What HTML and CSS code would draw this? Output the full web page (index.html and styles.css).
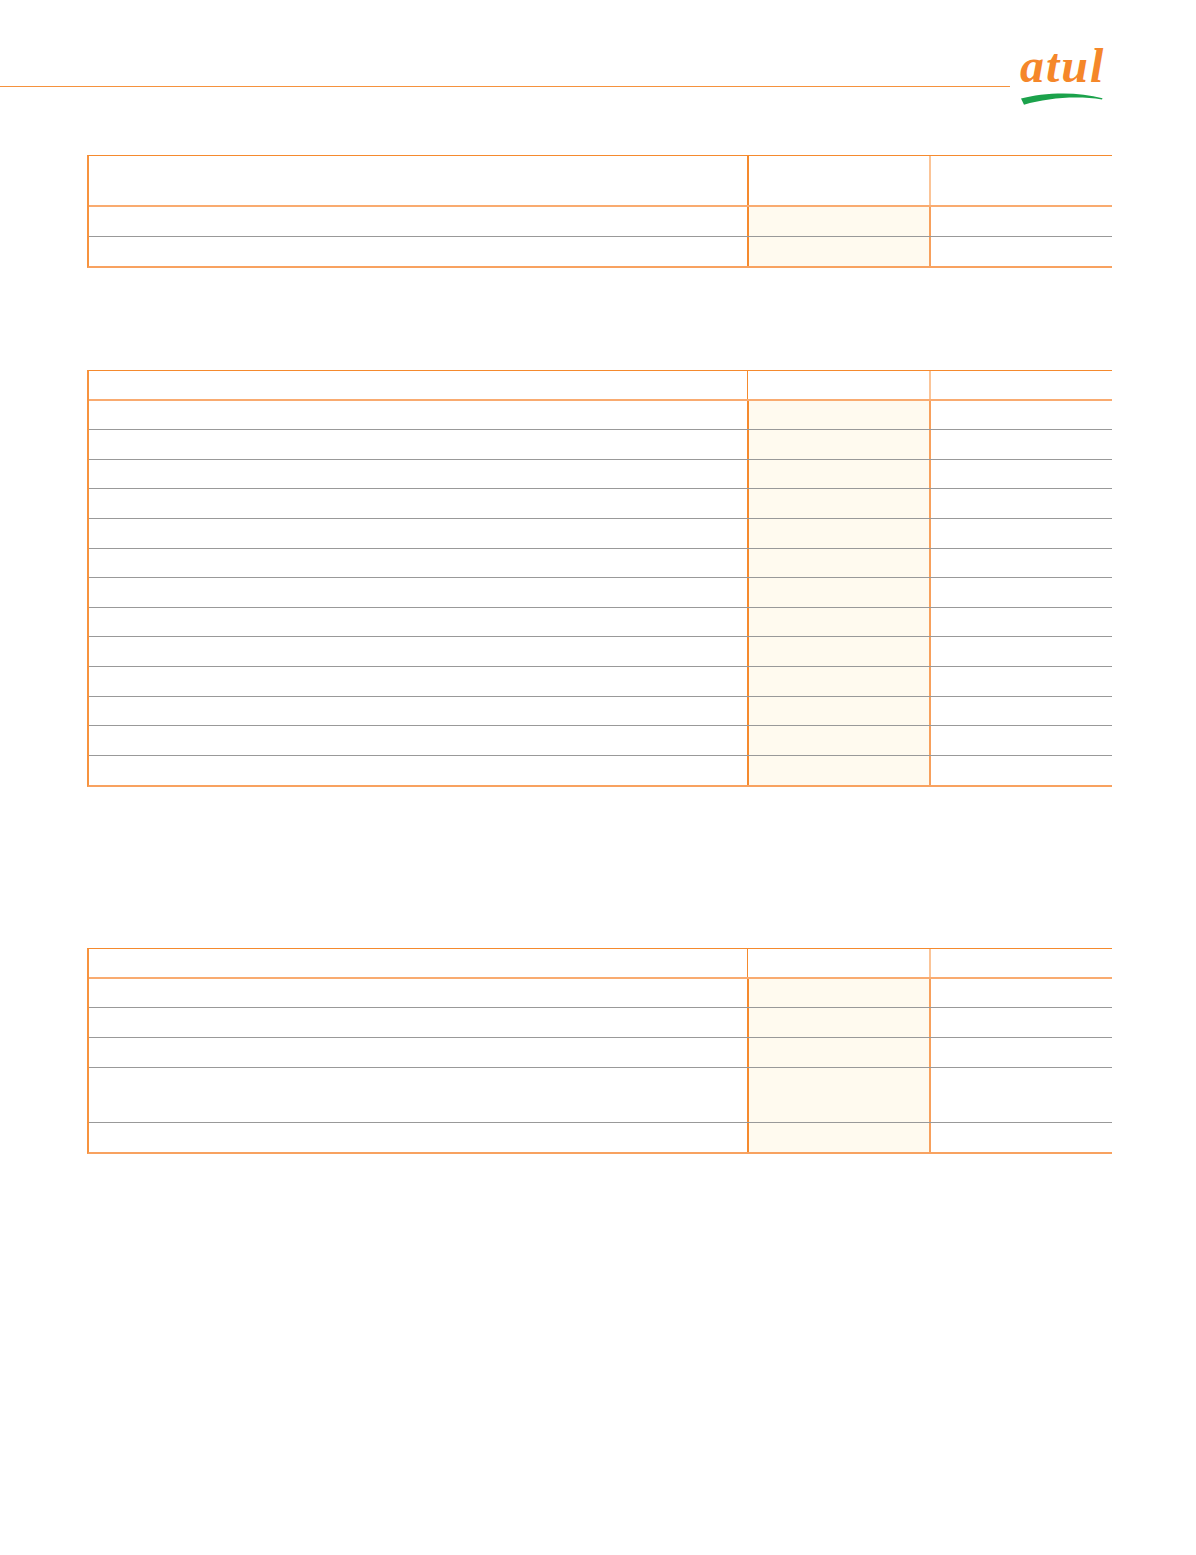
FILE: index.html
```html
<!DOCTYPE html>
<html>
<head>
<meta charset="utf-8">
<link rel="stylesheet" href="styles.css">
</head>
<body>
<header class="top">
  <div class="rule"></div>
  <div class="logo">
    <span class="logo-text">atul</span>
    <svg class="swoosh" width="82" height="14" viewBox="0 0 82 14">
      <path d="M0 6.5 C22 0.5 56 -1 81.5 6.2 L81 7.6 C56 3.5 26 6 3 12.8 Z" fill="#1ba24b"/>
    </svg>
  </div>
</header>

<section class="tbl t1">
  <div class="row head tall"><div class="c1"></div><div class="c2 nofill"></div><div class="c3 light"></div></div>
  <div class="row"><div class="c1"></div><div class="c2"></div><div class="c3"></div></div>
  <div class="row last"><div class="c1"></div><div class="c2"></div><div class="c3"></div></div>
</section>

<section class="tbl t2">
  <div class="row head"><div class="c1"></div><div class="c2 nofill thin"></div><div class="c3 light"></div></div>
  <div class="row"><div class="c1"></div><div class="c2"></div><div class="c3"></div></div>
  <div class="row"><div class="c1"></div><div class="c2"></div><div class="c3"></div></div>
  <div class="row"><div class="c1"></div><div class="c2"></div><div class="c3"></div></div>
  <div class="row"><div class="c1"></div><div class="c2"></div><div class="c3"></div></div>
  <div class="row"><div class="c1"></div><div class="c2"></div><div class="c3"></div></div>
  <div class="row"><div class="c1"></div><div class="c2"></div><div class="c3"></div></div>
  <div class="row"><div class="c1"></div><div class="c2"></div><div class="c3"></div></div>
  <div class="row"><div class="c1"></div><div class="c2"></div><div class="c3"></div></div>
  <div class="row"><div class="c1"></div><div class="c2"></div><div class="c3"></div></div>
  <div class="row"><div class="c1"></div><div class="c2"></div><div class="c3"></div></div>
  <div class="row"><div class="c1"></div><div class="c2"></div><div class="c3"></div></div>
  <div class="row"><div class="c1"></div><div class="c2"></div><div class="c3"></div></div>
  <div class="row last"><div class="c1"></div><div class="c2"></div><div class="c3"></div></div>
</section>

<section class="tbl t3">
  <div class="row head"><div class="c1"></div><div class="c2 nofill thin"></div><div class="c3 light"></div></div>
  <div class="row"><div class="c1"></div><div class="c2"></div><div class="c3"></div></div>
  <div class="row"><div class="c1"></div><div class="c2"></div><div class="c3"></div></div>
  <div class="row"><div class="c1"></div><div class="c2"></div><div class="c3"></div></div>
  <div class="row double"><div class="c1"></div><div class="c2"></div><div class="c3"></div></div>
  <div class="row last"><div class="c1"></div><div class="c2"></div><div class="c3"></div></div>
</section>
</body>
</html>
```

FILE: styles.css
```css
* { box-sizing: border-box; }
html, body { margin: 0; padding: 0; background: #ffffff; }
body {
  width: 1196px;
  min-height: 1555px;
  font-family: "Liberation Sans", Arial, sans-serif;
}

.top {
  display: flex;
  align-items: flex-start;
  height: 110px;
  padding-top: 45px;
}
.rule {
  width: 1010px;
  height: 1px;
  margin-top: 41px;
  background: #f5923e;
}
.logo {
  width: 96px;
  margin-left: 10px;
  display: flex;
  flex-direction: column;
  align-items: flex-start;
}
.logo-text {
  display: block;
  font-family: "Liberation Serif", "Times New Roman", serif;
  font-style: italic;
  font-weight: bold;
  font-size: 48px;
  line-height: 42px;
  letter-spacing: 2px;
  color: #f5872a;
  margin-left: 0;
}
.swoosh {
  display: block;
  margin-left: 1px;
  margin-top: 5px;
}

.tbl {
  width: 1025px;
  margin-left: 87px;
  border-top: 1px solid #f58a2e;
  border-left: 2px solid #f7933f;
  border-bottom: 2px solid #f8a260;
}
.t1 { margin-top: 45px; }
.t2 { margin-top: 102px; }
.t3 { margin-top: 161px; }

.row {
  display: grid;
  grid-template-columns: 658px 182px 1fr;
  height: 29.6px;
  border-bottom: 1px solid #999999;
}
.row.head {
  border-bottom: 2px solid #f9ab70;
  height: 30px;
}
.row.tall { height: 51px; }
.row.double { height: 55.5px; }
.row.last { border-bottom: none; height: 29px; }

.c2 {
  background: #fffaef;
  border-left: 2px solid #f58a2e;
}
.c2.nofill { background: #ffffff; }
.c2.thin { border-left-width: 1px; }
.c3 {
  border-left: 2px solid #f7a05c;
}
.c3.light { border-left-color: #fbc497; }
```
